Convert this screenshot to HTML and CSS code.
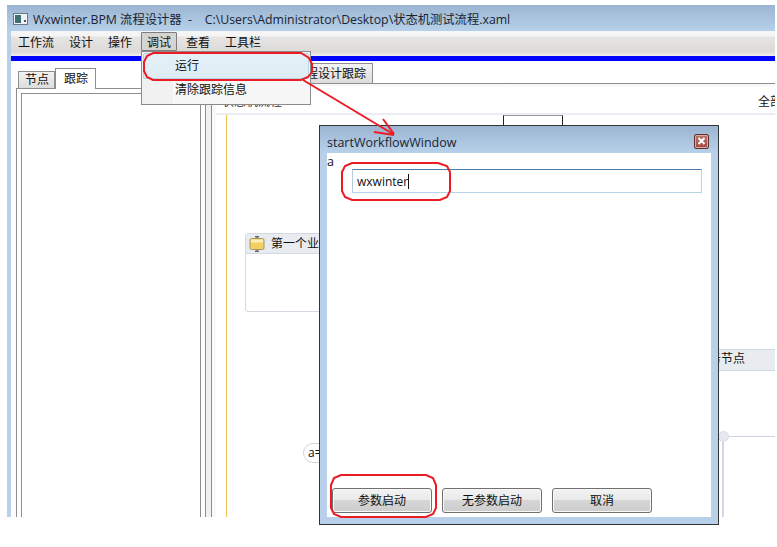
FILE: index.html
```html
<!DOCTYPE html>
<html lang="zh">
<head>
<meta charset="utf-8">
<title>Wxwinter.BPM</title>
<link rel="stylesheet" href="styles.css">
</head>
<body>
<div class="app">
  <div class="titlebar">
    <svg class="appicon" width="15" height="12" viewBox="0 0 15 12"><rect x="0.5" y="0.5" width="14" height="11" fill="#eef2f6" stroke="#6a7a8a"/><rect x="2" y="2" width="6" height="8" fill="#3f6f70"/><rect x="11" y="7" width="2" height="2" fill="#555"/></svg>
    <span class="wintitle">Wxwinter.BPM 流程设计器&nbsp;&nbsp;-&nbsp;&nbsp;&nbsp;&nbsp;C:\Users\Administrator\Desktop\状态机测试流程.xaml</span>
  </div>
  <div class="client">
    <div class="menubar">
      <span class="mitem">工作流</span>
      <span class="mitem">设计</span>
      <span class="mitem">操作</span>
      <span class="mitem active">调试</span>
      <span class="mitem">查看</span>
      <span class="mitem">工具栏</span>
    </div>
    <div class="blueline"></div>
    <div class="workspace">
      <div class="leftpane">
        <div class="lefttabs">
          <span class="tab">节点</span>
          <span class="tab selected">跟踪</span>
        </div>
        <div class="leftbody"><div class="leftinner"></div></div>
      </div>
      <div class="splitter"></div>
      <div class="rightpane">
        <div class="righttabs"><span class="tab designtab">流程设计跟踪</span></div>
        <div class="rightbody">
          <div class="toolbar">
            <span class="crumb">状态机流程</span>
            <span class="allbtn">全部</span>
          </div>
          <div class="canvas">
            <div class="startbox"></div>
            <div class="stateline"></div>
            <div class="card firstcard">
              <div class="cardhead">
                <svg class="cardicon" width="16" height="16" viewBox="0 0 16 16"><rect x="6" y="0" width="4" height="1.5" fill="#666"/><rect x="7.3" y="1" width="1.4" height="14" fill="#777"/><rect x="6" y="14.5" width="4" height="1.5" fill="#666"/><rect x="1" y="2.5" width="14" height="11" rx="1.5" fill="#f1cf62" stroke="#a89a66"/><rect x="2" y="3.5" width="12" height="3" fill="#fbeeb8"/></svg>
                <span class="cardtext">第一个业务节点</span>
              </div>
            </div>
            <div class="card secondcard">
              <div class="cardhead righthead"><span class="cardtext">务节点</span></div>
            </div>
            <div class="pill">a=</div>
            <div class="knob"></div>
            <div class="hline"></div>
            <div class="vline"></div>
          </div>
        </div>
      </div>
    </div>
  </div>
</div>

<div class="popup">
  <div class="popitem hot">运行</div>
  <div class="popitem">清除跟踪信息</div>
</div>

<div class="dialog">
  <div class="dlgtitle">
    <span>startWorkflowWindow</span>
    <span class="closebtn">
      <svg width="9" height="8" viewBox="0 0 9 8"><path d="M1.5 1 L7.5 7 M7.5 1 L1.5 7" stroke="#fff" stroke-width="2"/></svg>
    </span>
  </div>
  <div class="dlgbody">
    <div class="fieldlabel">a</div>
    <div class="inputbox"><span>wxwinter</span><i class="caret"></i></div>
    <div class="spacer"></div>
    <div class="btnrow">
      <span class="btn">参数启动</span>
      <span class="btn">无参数启动</span>
      <span class="btn">取消</span>
    </div>
  </div>
</div>

<svg class="marks" width="777" height="547" viewBox="0 0 777 547" fill="none" stroke="#ed1c24" stroke-width="2">
  <path d="M153 53 H301 L309 58 L312 64 V72 L308 77 L301 80 H153 L147 77 L144 71 V62 L147 56 Z"/>
  <path d="M303 80 L393 134 M383 119 L394 134 M374 132 L394 135"/>
  <path d="M352 163 H438 L447 166 L450 172 V191 L447 197 L440 200 H352 L345 197 L342 191 V172 L345 166 Z"/>
  <path d="M341 475 H426 L433 478 L436 485 V508 L433 514 L426 517 H341 L334 514 L331 508 V485 L334 478 Z"/>
</svg>
</body>
</html>
```
FILE: styles.css
```css
* { box-sizing: border-box; }
html, body { margin: 0; padding: 0; background: #fff; }
body {
  width: 777px;
  height: 547px;
  position: relative;
  overflow: hidden;
  font-family: "Open Sans", "Noto Sans CJK SC", sans-serif;
  font-size: 12px;
  color: #111;
}

.app {
  margin: 5px 0 0 7px;
  width: 768px;
  height: 512px;
  display: flex;
  flex-direction: column;
  background: #b8d0e9;
  overflow: hidden;
}
.titlebar {
  height: 26px;
  flex: none;
  display: flex;
  align-items: center;
  padding: 2px 0 0 6px;
  background: linear-gradient(#9bb4d1, #b8d1ea);
}
.appicon { flex: none; margin-right: 5px; }
.wintitle { font-size: 12.3px; color: #1a2430; white-space: pre; }

.client {
  flex: 1;
  margin-left: 4px;
  display: flex;
  flex-direction: column;
  min-height: 0;
  background: #fff;
}
.menubar {
  height: 25px;
  flex: none;
  display: flex;
  align-items: flex-start;
  padding: 1px 0 0 1px;
  background: linear-gradient(#f5f5f5 0, #f5f5f5 5px, #e6e5e4 6px, #dbdad8 21px, #ecebea 24px);
}
.mitem {
  height: 19px;
  line-height: 19px;
  padding: 0 5px;
  margin-right: 3px;
  white-space: nowrap;
  border: 1px solid transparent;
  border-radius: 1px;
}
.mitem.active {
  background: #d4d4d2;
  border-color: #7d7d7d;
}
.blueline { height: 5px; flex: none; background: #0000fe; }

.workspace { flex: 1; display: flex; min-height: 0; background: #fff; }

.leftpane {
  width: 195px;
  flex: none;
  display: flex;
  flex-direction: column;
  padding: 7px 0 0 5px;
}
.lefttabs { height: 20px; flex: none; display: flex; padding-left: 2px; position: relative; z-index: 1; }
.tab {
  display: block;
  height: 17px;
  margin-top: 3px;
  line-height: 16px;
  padding: 0 5px 0 6px;
  background: linear-gradient(#f3f3f3, #dcdcdc);
  border: 1px solid #8e8e8e;
  border-bottom: 0;
  white-space: nowrap;
}
.tab.selected {
  height: 21px;
  margin-top: 0;
  width: 41px;
  line-height: 19px;
  padding: 0 8px;
  background: #fff;
}
.leftbody {
  flex: 1;
  border: 1px solid #8e8e8e;
  border-bottom: 0;
  padding: 4px 4px 0 4px;
}
.leftinner { height: 100%; border: 1px solid #8e8e8e; border-bottom: 0; }

.splitter { width: 6px; flex: none; background: #f1f1f1; border-right: 1px solid #8e8e8e; margin-top: 27px; }

.rightpane { flex: 1; display: flex; flex-direction: column; min-width: 0; padding-top: 2px; }
.righttabs { height: 20px; flex: none; padding-left: 75px; }
.tab.designtab { margin-top: 0; height: 20px; line-height: 20px; padding: 0 7px 0 6px; width: 86px; }
.rightbody {
  flex: 1;
  display: flex;
  flex-direction: column;
  min-height: 0;
  border-top: 1px solid #8e8e8e;
  padding-left: 4px;
  background: #f8f8f8;
}
.toolbar {
  height: 31px;
  flex: none;
  display: flex;
  justify-content: space-between;
  align-items: flex-end;
  padding: 0 0 4px 6px;
  background: linear-gradient(#f6f6f6 0, #fff 4px);
  border-bottom: 2px solid #ececf4;
}
.crumb { line-height: 14px; color: #333; }
.allbtn { line-height: 14px; width: 17px; overflow: hidden; white-space: nowrap; flex: none; }

.canvas { flex: 1; position: relative; background: #fff; overflow: hidden; }
.stateline { position: absolute; left: 10px; top: 0; bottom: 0; width: 1px; background: #eac04f; }
.startbox {
  position: absolute; left: 287px; top: 0;
  width: 60px; height: 14px;
  background: #fff;
  border: 1px solid #222;
  border-top-color: #999;
  border-bottom: 0;
}
.card {
  position: absolute;
  background: #fff;
  border: 1px solid #d3d8e3;
  border-radius: 3px;
}
.firstcard { left: 29px; top: 118px; width: 120px; height: 79px; }
.secondcard { left: 430px; top: 234px; width: 140px; height: 80px; border-bottom: 0; border-left: 0; border-right: 0; }
.cardhead {
  height: 20px;
  display: flex;
  align-items: center;
  gap: 6px;
  padding-left: 3px;
  background: #e8ecf0;
  border-bottom: 1px solid #d3d8e3;
  white-space: nowrap;
}
.cardtext { margin-top: -2px; }
.cardicon { flex: none; }
.righthead { height: 21px; justify-content: flex-start; padding-left: 63px; }
.righthead .cardtext { margin-top: -4px; }
.pill {
  position: absolute;
  left: 87px; top: 328px;
  width: 40px; height: 20px;
  line-height: 17px;
  padding-left: 4px;
  background: #fff;
  border: 1px solid #d6d6d6;
  border-radius: 10px;
}
.knob { position: absolute; left: 502px; top: 316px; width: 11px; height: 11px; border-radius: 50%; background: #e6e9ee; border: 1px solid #d8dde6; }
.hline { position: absolute; left: 513px; right: 0; top: 321px; height: 1px; background: #cdd5e3; }
.vline { position: absolute; left: 506px; top: 327px; bottom: 0; width: 2px; background: #d3d8e6; }

.popup {
  position: absolute;
  left: 141px; top: 51px;
  width: 170px; height: 54px;
  padding: 1px;
  background: linear-gradient(90deg, #f1f1f1 0, #f1f1f1 31px, #fff 32px, #f6f6f6 33px);
  border: 1px solid #8b8b8b;
}
.popitem {
  height: 24px;
  line-height: 21px;
  padding-left: 32px;
  white-space: nowrap;
}
.popitem.hot {
  height: 26px;
  line-height: 23px;
  background: linear-gradient(#e4f0f6, #deedf5);
  border: 1px solid #b5d4e6;
  border-radius: 2px;
  padding-left: 31px;
}

.dialog {
  position: absolute;
  left: 319px; top: 125px;
  width: 400px; height: 400px;
  display: flex;
  flex-direction: column;
  background: #b8d0e9;
  border: 1px solid #333;
  padding: 0 7px 7px 7px;
}
.dlgtitle {
  height: 27px;
  flex: none;
  margin: 0 -7px;
  padding: 6px 9px 0 7px;
  display: flex;
  align-items: center;
  justify-content: space-between;
  background: linear-gradient(#9bb4d1, #b8d1ea);
  font-size: 12.5px;
  color: #1a2430;
}
.closebtn {
  width: 15px; height: 15px;
  display: flex;
  align-items: center;
  justify-content: center;
  background: linear-gradient(#b8776e, #a5483e);
  border: 1px solid #5c3230;
  border-radius: 2px;
  box-shadow: inset 0 0 0 1px #d9a9a2;
  margin-top: -3px;
}
.dlgbody {
  flex: 1;
  display: flex;
  flex-direction: column;
  min-height: 0;
  background: #fff;
}
.fieldlabel { height: 16px; line-height: 18px; font-size: 12.5px; }
.inputbox {
  margin-left: 25px;
  width: 350px;
  height: 24px;
  flex: none;
  display: flex;
  align-items: center;
  padding-left: 4px;
  font-size: 12px;
  border: 1px solid #b7d3e6;
  border-top-color: #4c7ea9;
  border-left-color: #b2cde0;
}
.caret { display: block; width: 1px; height: 15px; background: #111; }
.spacer { flex: 1; }
.btnrow { display: flex; gap: 10px; padding-left: 5px; padding-bottom: 4px; }
.btn {
  display: block;
  width: 100px;
  height: 25px;
  line-height: 24px;
  text-align: center;
  background: linear-gradient(#f2f2f2 0, #ebebeb 45%, #d6d6d6 50%, #cdcdcd 100%);
  border: 1px solid #707070;
  border-radius: 3px;
  box-shadow: inset 0 0 0 1px #f8f8f8;
}

.marks { position: absolute; left: 0; top: 0; pointer-events: none; }
```
